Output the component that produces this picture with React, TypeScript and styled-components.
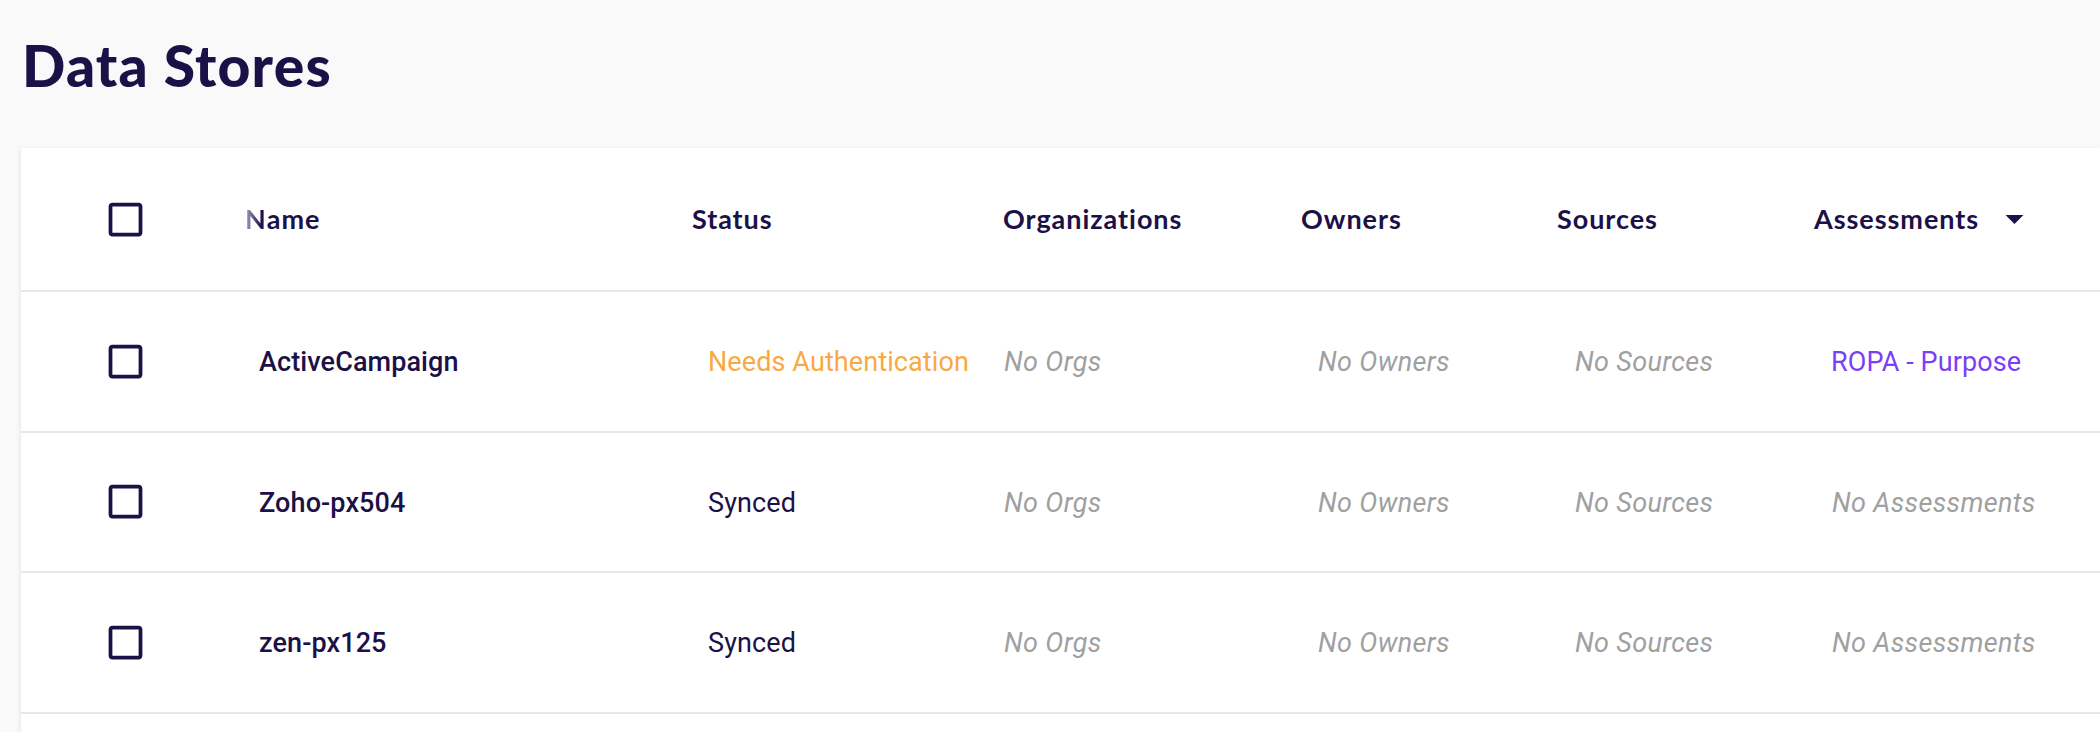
import React from "react";
import styled, { createGlobalStyle } from "styled-components";

const GlobalStyle = createGlobalStyle`
  html, body {
    margin: 0;
    padding: 0;
    background: #f9f9f9;
    overflow: hidden;
  }
  body {
    font-family: Roboto, "Liberation Sans", sans-serif;
  }
`;

const Page = styled.div`
  display: flex;
  flex-direction: column;
  height: 732px;
  padding: 32px 0 0 21px;
  box-sizing: border-box;
  overflow: hidden;
`;

const Title = styled.h1`
  margin: 0 0 49px 1px;
  font-family: Lato, "Liberation Sans", sans-serif;
  font-weight: 900;
  font-size: 57px;
  line-height: 67px;
  color: #1c1147;
  letter-spacing: 1.2px;
`;

const Card = styled.div`
  flex: 1;
  background: #ffffff;
  box-shadow: -1px 1px 4px rgba(0, 0, 0, 0.08);
`;

const COLS = "224px 447px 311px 298px 256px 257px 1fr";

const HeaderRow = styled.div`
  display: grid;
  grid-template-columns: ${COLS};
  align-items: center;
  height: 144px;
  box-sizing: border-box;
  border-bottom: 2px solid #e4e8ed;
`;

const BodyRow = styled.div`
  display: grid;
  grid-template-columns: ${COLS};
  align-items: center;
  height: 140.5px;
  box-sizing: border-box;
  border-bottom: 2px solid #e4e8ed;
`;

const CheckCell = styled.div`
  display: flex;
  align-items: center;
  padding-left: 82px;
`;

const HeadCell = styled.div`
  display: flex;
  align-items: center;
  padding-bottom: 2px;
  font-family: Lato, "Liberation Sans", sans-serif;
  font-weight: 700;
  font-size: 27px;
  letter-spacing: 0.95px;
  color: #1c1147;
  white-space: nowrap;
`;

const FadedInitial = styled.span`
  background: linear-gradient(90deg, #a7a2c0 0%, #1c1147 75%);
  -webkit-background-clip: text;
  background-clip: text;
  color: transparent;
`;

type Tone = "name" | "plain" | "warn" | "muted" | "link";

const toneColor: Record<Tone, string> = {
  name: "#1c1147",
  plain: "#1c1147",
  warn: "#f9a944",
  muted: "#a0a0a0",
  link: "#7b3ff5",
};

const Cell = styled.div<{ $indent: number; $tone: Tone }>`
  padding-left: ${(p) => p.$indent}px;
  padding-top: 2px;
  font-family: Roboto, "Liberation Sans", sans-serif;
  font-size: 27px;
  font-weight: ${(p) => (p.$tone === "name" ? 500 : 400)};
  font-style: ${(p) => (p.$tone === "muted" ? "italic" : "normal")};
  letter-spacing: ${(p) => (p.$tone === "muted" ? "0.35px" : "0.1px")};
  color: ${(p) => toneColor[p.$tone]};
  white-space: nowrap;
`;

const SortIcon = styled.svg`
  width: 43px;
  height: 43px;
  margin-left: 14px;
  flex: none;
`;

const CheckIcon = styled.svg`
  width: 45px;
  height: 45px;
  display: block;
`;

const Checkbox = () => (
  <CheckIcon viewBox="0 0 24 24" aria-hidden="true">
    <path
      fill="#1c1147"
      d="M19 5v14H5V5h14m0-2H5c-1.11 0-2 .9-2 2v14c0 1.1.89 2 2 2h14c1.1 0 2-.9 2-2V5c0-1.1-.9-2-2-2z"
    />
  </CheckIcon>
);

type Row = {
  name: string;
  status: string;
  statusTone: Tone;
  assessment: string;
  assessmentTone: Tone;
};

const rows: Row[] = [
  {
    name: "ActiveCampaign",
    status: "Needs Authentication",
    statusTone: "warn",
    assessment: "ROPA - Purpose",
    assessmentTone: "link",
  },
  {
    name: "Zoho-px504",
    status: "Synced",
    statusTone: "plain",
    assessment: "No Assessments",
    assessmentTone: "muted",
  },
  {
    name: "zen-px125",
    status: "Synced",
    statusTone: "plain",
    assessment: "No Assessments",
    assessmentTone: "muted",
  },
];

export default function App() {
  return (
    <>
      <GlobalStyle />
      <Page>
        <Title>Data Stores</Title>
        <Card>
          <HeaderRow>
            <CheckCell>
              <Checkbox />
            </CheckCell>
            <HeadCell>
              <FadedInitial>N</FadedInitial>ame
            </HeadCell>
            <HeadCell>Status</HeadCell>
            <HeadCell>Organizations</HeadCell>
            <HeadCell>Owners</HeadCell>
            <HeadCell>Sources</HeadCell>
            <HeadCell>
              Assessments
              <SortIcon viewBox="0 0 24 24" aria-hidden="true">
                <path fill="#1c1147" d="M7 10l5 5 5-5z" />
              </SortIcon>
            </HeadCell>
          </HeaderRow>
          {rows.map((r) => (
            <BodyRow key={r.name}>
              <CheckCell>
                <Checkbox />
              </CheckCell>
              <Cell $indent={14} $tone="name">
                {r.name}
              </Cell>
              <Cell $indent={16} $tone={r.statusTone}>
                {r.status}
              </Cell>
              <Cell $indent={1} $tone="muted">
                No Orgs
              </Cell>
              <Cell $indent={17} $tone="muted">
                No Owners
              </Cell>
              <Cell $indent={18} $tone="muted">
                No Sources
              </Cell>
              <Cell $indent={r.assessmentTone === "link" ? 17 : 18} $tone={r.assessmentTone}>
                {r.assessment}
              </Cell>
            </BodyRow>
          ))}
        </Card>
      </Page>
    </>
  );
}
